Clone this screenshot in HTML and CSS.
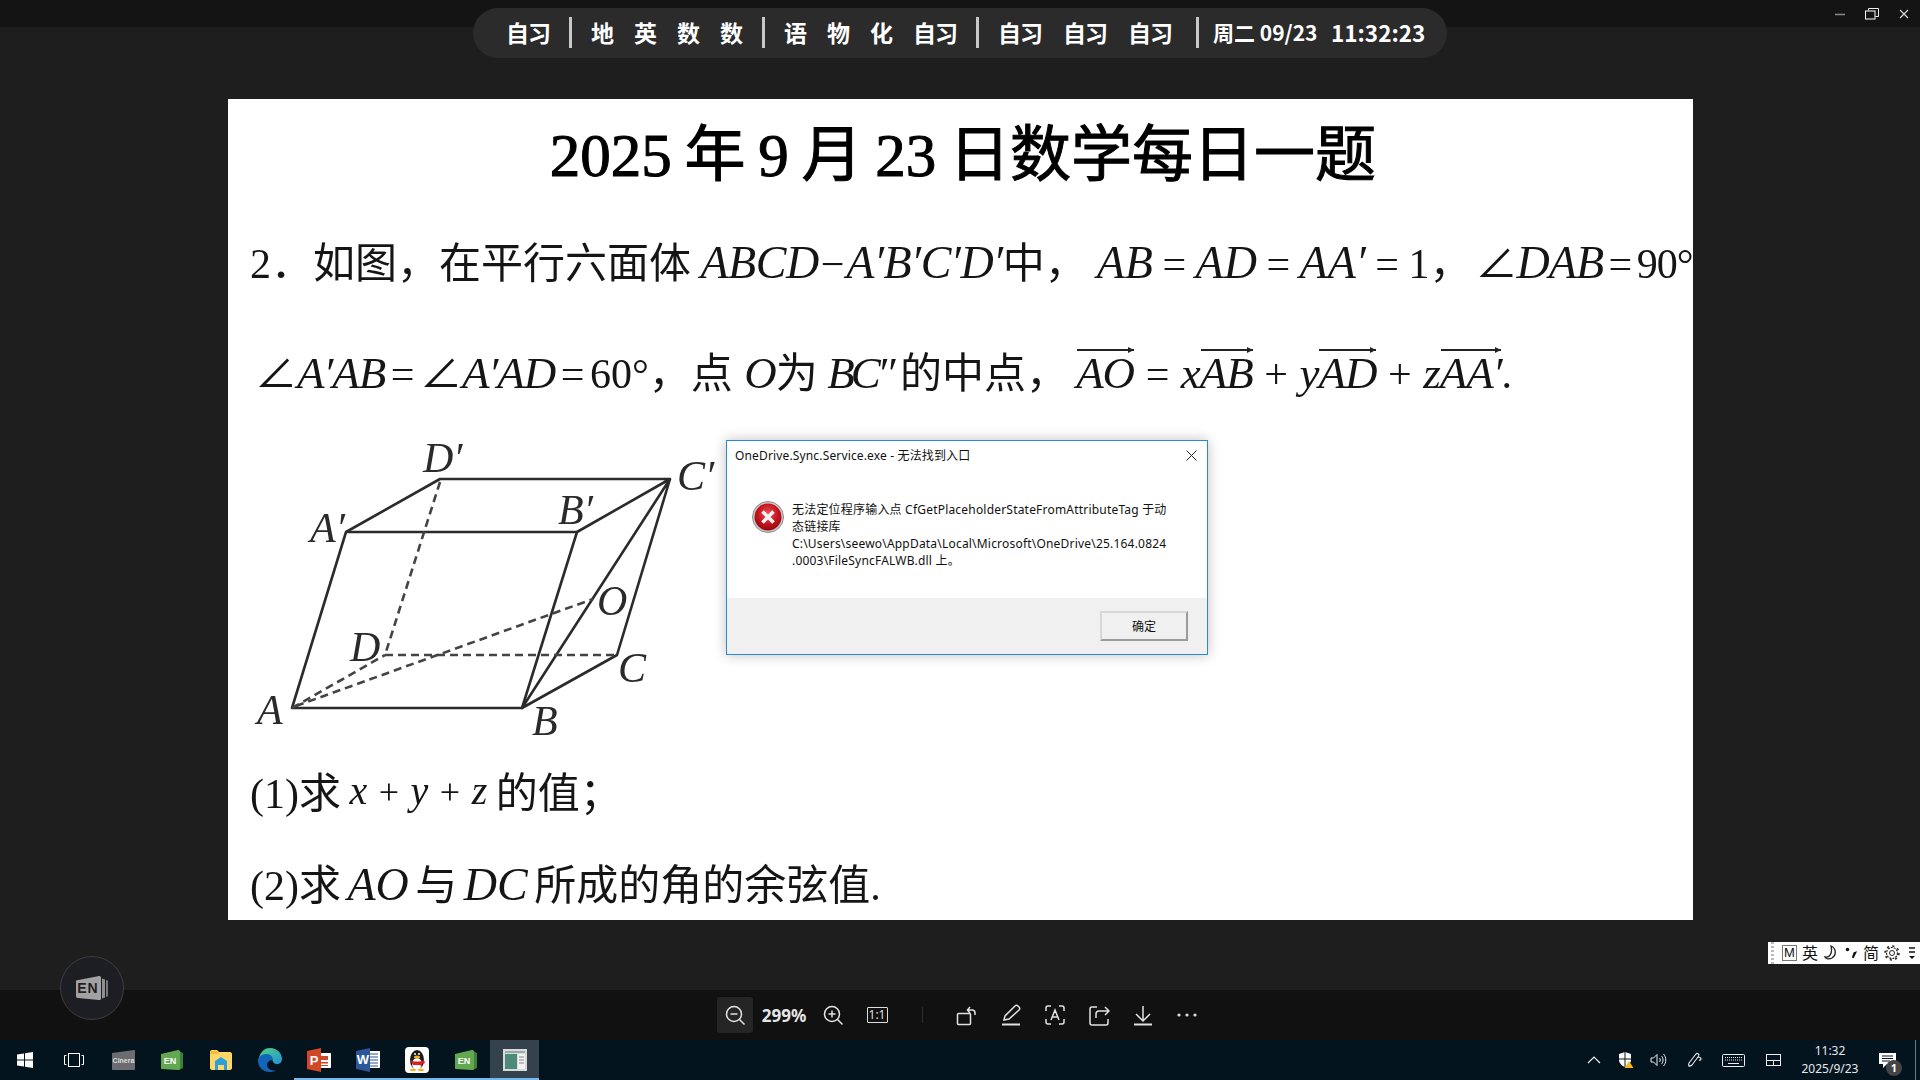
FILE: index.html
```html
<!DOCTYPE html>
<html lang="zh">
<head>
  <meta charset="UTF-8" />
  <title>图片查看</title>
  <link rel="stylesheet" href="styles.css">
</head>
<body>
  <div class="titlebar">
    <div class="win-btn"><svg width="12" height="12"><path d="M1 6.5h10" stroke="#8a8a8a" stroke-width="1.5"/></svg></div>
    <div class="win-btn"><svg width="14" height="12" viewBox="0 0 14 12"><path d="M3.5 2.5V.5h10v8h-3" fill="none" stroke="#eee"/><rect x=".5" y="3" width="9.5" height="8" fill="none" stroke="#fff"/></svg></div>
    <div class="win-btn"><svg width="10" height="10"><path d="M1 1l8 8M9 1l-8 8" stroke="#ddd" stroke-width="1.1"/></svg></div>
  </div>

  <div class="schedule">
    <span class="cn-pair">自习</span>
    <i class="sep"></i>
    <span class="group"><b>地</b><b>英</b><b>数</b><b>数</b></span>
    <i class="sep"></i>
    <span class="group"><b>语</b><b>物</b><b>化</b><b class="cn-pair">自习</b></span>
    <i class="sep"></i>
    <span class="group wide"><b class="cn-pair">自习</b><b class="cn-pair">自习</b><b class="cn-pair">自习</b></span>
    <i class="sep sep-last"></i>
    <span class="clock-text"><span class="date">周二 09/23</span><span class="time">11:32:23</span></span>
  </div>

  <main class="viewer">
    <div class="slide">
      <h1 class="slide-title">2025 年 9 月 23 日数学每日一题</h1>
      <div class="line line-a">2．如图，在平行六面体 <em class="m-wide">ABCD</em><span class="minus">−</span><em class="m-wide">A′B′C′D′</em>中，<em class="m-gap">AB</em> = <em>AD</em> = <em>AA′</em> = 1，<span class="right-angle"><span>∠</span><em>DAB</em> = 90°</span></div>
      <div class="line line-b"><span class="angle">∠</span><em>A′AB</em> = <span>∠</span><em>A′AD</em> = 60°，点 <em class="pt-o">O</em>为 <em class="bc">BC″</em> <span class="mid-text">的中点，</span><span class="vec-eq"><em class="vec vec-first">AO</em> = <em>x</em><em class="vec">AB</em> + <em>y</em><em class="vec">AD</em> + <em>z</em><em class="vec">AA′</em>.</span></div>

      <svg class="figure" width="480" height="320" viewBox="250 430 480 320">
        <g fill="none" stroke="#2b2b2b" stroke-width="2.6" stroke-linejoin="round">
          <path d="M292 706L346 530H577L522 706Z"/>
          <path d="M346 530L440 477H670L577 530"/>
          <path d="M670 477L617 653L522 706L670 477"/>
        </g>
        <g fill="none" stroke="#444" stroke-width="2.6" stroke-dasharray="8 5">
          <path d="M440 480L385 653"/>
          <path d="M385 653H617"/>
          <path d="M292 706L385 653"/>
          <path d="M296 704L593 597"/>
        </g>
        <g class="fig-label">
          <text x="423" y="470">D′</text>
          <text x="677" y="488">C′</text>
          <text x="558" y="522">B′</text>
          <text x="310" y="540">A′</text>
          <text x="597" y="613">O</text>
          <text x="350" y="659">D</text>
          <text x="618" y="680">C</text>
          <text x="257" y="722">A</text>
          <text x="532" y="733">B</text>
        </g>
      </svg>

      <div class="line line-c">(1)求 <span class="raised"><em class="small-math">x</em> <span class="small-math">+</span> <em class="small-math">y</em> <span class="small-math">+</span> <em class="small-math">z</em></span> 的值；</div>
      <div class="line line-d">(2)求 <em>AO</em> 与 <em>DC</em> 所成的角的余弦值.</div>
    </div>
  </main>

  <div class="dialog">
    <div class="dialog-title">OneDrive.Sync.Service.exe - 无法找到入口</div>
    <svg class="dialog-close" width="11" height="11"><path d="M.5.5l10 10M10.500.5l-10 10" stroke="#222"/></svg>
    <div class="dialog-body">
      <svg width="32" height="32" viewBox="0 0 32 32">
        <defs>
          <radialGradient id="errRed" cx="50%" cy="38%" r="65%">
            <stop offset="0" stop-color="#e8525a"/>
            <stop offset=".6" stop-color="#c4121c"/>
            <stop offset="1" stop-color="#8a0a10"/>
          </radialGradient>
        </defs>
        <circle cx="16" cy="16" r="15.500" fill="#c9c9c9" stroke="#8d8d8d"/>
        <circle cx="16" cy="16" r="13.500" fill="url(#errRed)"/>
        <path d="M10.500 10.500l11 11M21.500 10.500l-11 11" stroke="#f4f4f4" stroke-width="3.600"/>
      </svg>
      <p class="dialog-msg">无法定位程序输入点 CfGetPlaceholderStateFromAttributeTag 于动<br>态链接库<br>C:\Users\seewo\AppData\Local\Microsoft\OneDrive\25.164.0824<br>.0003\FileSyncFALWB.dll 上。</p>
    </div>
    <div class="dialog-foot"><button class="dialog-ok">确定</button></div>
  </div>

  <div class="float-en">
    <svg width="34" height="26" viewBox="0 0 34 26">
      <path d="M27 3.500l3 1v18l-3 1z" fill="#8f8f8f"/><path d="M31 5l2 .8v15.400l-2 .8z" fill="#777"/>
      <path d="M1 5.500L24 1c1.500-.2 2 .5 2 2v20c0 1.500-.5 2.200-2 2L3 23c-1.500-.1-2-.8-2-2z" fill="#a2a2a2"/>
      <text x="13" y="18" class="en-mark">EN</text>
    </svg>
  </div>

  <div class="ime">
    <i class="ime-grip"></i>
    <span class="ime-m">M</span>
    <span class="ime-cn">英</span>
    <svg width="16" height="16" viewBox="0 0 16 16"><path d="M8 1c5 2 6 9 1 12-3 1.500-6 1-7-1 4 1 8-3 6-11z" fill="none" stroke="#222" stroke-width="1.300"/></svg>
    <svg width="14" height="16" viewBox="0 0 16 16"><circle cx="4" cy="4" r="2" fill="#111"/><path d="M11 7l4-1-4 8-2-1z" fill="#111"/></svg>
    <span class="ime-cn">简</span>
    <svg width="16" height="16" viewBox="0 0 16 16"><circle cx="8" cy="8" r="2.500" fill="none" stroke="#222"/><circle cx="8" cy="8" r="5.500" fill="none" stroke="#222" stroke-width="1.200" stroke-dasharray="2 1"/><circle cx="8" cy="8" r="7" fill="none" stroke="#222" stroke-width="1.500" stroke-dasharray="2.200 3.300"/></svg>
    <svg class="ime-more" width="8" height="16" viewBox="0 0 8 16"><path d="M1 3h6M1 7h6" stroke="#111" stroke-width="1.600"/><path d="M1 11h6l-3 3z" fill="#111"/></svg>
  </div>

  <div class="toolbar">
    <div class="tool active"><svg width="22" height="22" viewBox="0 0 22 22" class="ic"><circle cx="10" cy="10" r="7.500"/><path d="M6.500 10h7M15.500 15.500l5 5"/></svg></div>
    <div class="zoom-pct">299%</div>
    <div class="tool"><svg width="22" height="22" viewBox="0 0 22 22" class="ic"><circle cx="10" cy="10" r="7.500"/><path d="M6.500 10h7M10 6.500v7M15.500 15.500l5 5"/></svg></div>
    <div class="tool"><span class="one-one">1:1</span></div>
    <i class="tool-div"></i>
    <div class="tool"><svg width="22" height="22" viewBox="0 0 22 22" class="ic"><rect x="1.500" y="9.500" width="13" height="11" rx="1"/><path d="M12 6h4c2 0 3 1 3 3v2M14 3l-2.500 3 2.500 3" /></svg></div>
    <div class="tool"><svg width="22" height="22" viewBox="0 0 22 22" class="ic"><path d="M4 16l1-4L15 2c1-1 2-1 3 0l1 1c1 1 1 2 0 3L9 15z"/><path d="M2 20.500h18" stroke-width="2"/></svg></div>
    <div class="tool"><svg width="22" height="22" viewBox="0 0 22 22" class="ic"><path d="M2 7V4c0-1 1-2 2-2h3M15 2h3c1 0 2 1 2 2v3M20 15v3c0 1-1 2-2 2h-3M7 20H4c-1 0-2-1-2-2v-3M7 16l4-10 4 10M8.500 13h5"/></svg></div>
    <div class="tool"><svg width="22" height="22" viewBox="0 0 22 22" class="ic"><path d="M9 3H4C3 3 2 4 2 5v14c0 1 1 2 2 2h14c1 0 2-1 2-2v-4M8 14V10c0-2 1-3 3-3h9M17 3l4 4-4 4"/></svg></div>
    <div class="tool"><svg width="22" height="22" viewBox="0 0 22 22" class="ic"><path d="M11 2v14M4 10l7 7 7-7"/><path d="M2 20.500h18" stroke-width="2"/></svg></div>
    <div class="tool"><svg width="22" height="6" viewBox="0 0 22 6"><circle cx="3" cy="3" r="1.600" fill="#ddd"/><circle cx="11" cy="3" r="1.600" fill="#ddd"/><circle cx="19" cy="3" r="1.600" fill="#ddd"/></svg></div>
  </div>

  <footer class="taskbar">
    <div class="task"><svg width="16" height="16" viewBox="0 0 16 16" fill="#fff"><path d="M0 2.500l7-1v6H0zM8 1.300L16 0v7.500H8zM0 8.500h7v6l-7-1zM8 8.500h8V16l-8-1.300z"/></svg></div>
    <div class="task"><svg width="20" height="14" viewBox="0 0 20 14" fill="none" stroke="#fff"><rect x="4.500" y=".5" width="11" height="13"/><path d="M2.500 2.500H.5v9h2M17.500 2.500h2v9h-2"/></svg></div>
    <div class="task"><svg width="24" height="22" viewBox="0 0 24 22"><path d="M1 4l22-3c.6 0 1 .4 1 1v18c0 .6-.4 1-1 1H2c-.6 0-1-.4-1-1z" fill="#6a6c70"/><text x="12.500" y="14" class="cinera">Cinera</text></svg></div>
    <div class="task"><svg width="24" height="22" viewBox="0 0 24 22"><path d="M19 2l4 2v15l-4 2z" fill="#3f7f3c"/><path d="M1 5l17-4c1 0 2 .5 2 2v16c0 1.500-1 2-2 2L2 20c-.6 0-1-.4-1-1z" fill="#62a850"/><text x="10" y="15" class="en-white">EN</text></svg></div>
    <div class="task"><svg width="22" height="20" viewBox="0 0 22 20"><path d="M0 2c0-1 .5-2 2-2h5l2 2h11c1 0 2 1 2 2v14c0 1-1 2-2 2H2c-1 0-2-1-2-2z" fill="#ffd766"/><path d="M0 4h8l1-2H7L6 1H1z" fill="#f0b93a"/><path d="M5 11l6-4 6 4v9h-3v-5H8v5H5z" fill="#2a9fe0" transform="translate(0 0)"/></svg></div>
    <div class="task"><svg width="24" height="24" viewBox="0 0 24 24"><defs><linearGradient id="edgeA" x1="0" y1="0" x2="1" y2="1"><stop offset="0" stop-color="#52d27c"/><stop offset="1" stop-color="#1f94d8"/></linearGradient></defs><path d="M12 0c7 0 12 5 12 11 0 3-2 5-5 5-3 0-4-2-4-3 0 .8-3-6-8-5-4 1-6 3-7 6C1 6 5 0 12 0z" fill="url(#edgeA)"/><path d="M0 13c0-4 4-7 8-7 5 0 7 3 7 6-2 0-6 1-6 5 0 3 4 7 10 5-2 1-4 2-7 2C5 24 0 19 0 13z" fill="#1266b8"/></svg></div>
    <div class="task running"><svg width="24" height="24" viewBox="0 0 24 24"><path d="M8 5h15c.6 0 1 .4 1 1v13c0 .6-.4 1-1 1H8z" fill="#fff"/><path d="M13 8h8v4h-8zM13 14h8v1.500h-8zM13 17h8v1h-8z" fill="#d24726"/><path d="M0 3l14-3v24L0 21z" fill="#d24726"/><text x="7" y="17" class="doc-letter">P</text></svg></div>
    <div class="task running"><svg width="24" height="24" viewBox="0 0 24 24"><path d="M8 3h15c.6 0 1 .4 1 1v15c0 .6-.4 1-1 1H8z" fill="#fff"/><path d="M14 6h8M14 9h8M14 12h8M14 15h8M14 18h8" stroke="#2b579a" stroke-width="1.200"/><path d="M0 3l14-3v24L0 21z" fill="#2b579a"/><text x="7" y="16" class="doc-letter">W</text></svg></div>
    <div class="task running"><svg width="24" height="26" viewBox="0 0 24 26"><rect width="24" height="26" rx="4" fill="#fff"/><ellipse cx="12" cy="13" rx="7" ry="10" fill="#1a1a1a"/><ellipse cx="12" cy="17" rx="5" ry="6" fill="#fff"/><path d="M5 13c4 2 10 2 14 0l1 3-3 1v3l-2-2H8z" fill="#d9202a"/><ellipse cx="12" cy="10" rx="3" ry="1.500" fill="#f5b321"/><circle cx="10" cy="7" r="1" fill="#fff"/><circle cx="14" cy="7" r="1" fill="#fff"/><ellipse cx="8" cy="23" rx="3" ry="1.300" fill="#f5b321"/><ellipse cx="16" cy="23" rx="3" ry="1.300" fill="#f5b321"/></svg></div>
    <div class="task running"><svg width="24" height="22" viewBox="0 0 24 22"><path d="M19 2l4 2v15l-4 2z" fill="#3f7f3c"/><path d="M1 5l17-4c1 0 2 .5 2 2v16c0 1.500-1 2-2 2L2 20c-.6 0-1-.4-1-1z" fill="#62a850"/><text x="10" y="15" class="en-white">EN</text></svg></div>
    <div class="task running current"><svg width="24" height="22" viewBox="0 0 24 22"><rect width="24" height="22" fill="#d8dcd8"/><rect x="2" y="2" width="20" height="2" fill="#9aa"/><rect x="2" y="5" width="12" height="15" fill="#4e8a78"/><rect x="15" y="5" width="7" height="15" fill="#f2f2f2"/><path d="M16 8h5M16 11h5M16 14h5" stroke="#888"/></svg></div>

    <div class="tray">
      <div class="tray-item w32"><svg width="14" height="8" viewBox="0 0 14 8"><path d="M1 7l6-6 6 6" fill="none" stroke="#eee" stroke-width="1.200"/></svg></div>
      <div class="tray-item w32"><svg width="16" height="16" viewBox="0 0 16 16"><path d="M7 0l6 2v6c0 3-3 6-6 7-3-1-6-4-6-7V2z" fill="#fff"/><path d="M7 0v15M1 7h12" stroke="#06141e"/><path d="M11 9l4.500 7h-9z" fill="#f3b81a"/></svg></div>
      <div class="tray-item w32"><svg width="17" height="14" viewBox="0 0 17 14" fill="none" stroke="#eee"><path d="M1 5h2.500L7 1.500v11L3.500 9H1zM9.500 5c1 1 1 3 0 4M11.500 3c2 2 2 6 0 8M13.500 1c3 3 3 9 0 12"/></svg></div>
      <div class="tray-item w40"><svg width="17" height="17" viewBox="0 0 17 17" fill="none" stroke="#eee" stroke-width="1.100"><path d="M3 11l7-9c1-1 2-.5 2.500 0s.5 1.500 0 2.300L6 13c-1 1-2 1-3 1.200-.5-1 -.5-2 0-3.200zM12 5c2 0 3 1 3 2s-1 1.500-2 1"/></svg></div>
      <div class="tray-item w38"><svg width="23" height="13" viewBox="0 0 23 13" fill="none" stroke="#eee"><rect x=".5" y=".5" width="22" height="12" rx="1"/><path d="M3 3.500h17M3 6h17" stroke-dasharray="1 1"/><path d="M6 9.500h11"/></svg></div>
      <div class="tray-item w42"><svg width="15" height="12" viewBox="0 0 15 12" fill="none" stroke="#eee"><rect x=".5" y=".5" width="14" height="11"/><path d="M.5 6.500h14M7.500 6.500v5"/></svg></div>
      <div class="tray-clock"><span>11:32</span><span>2025/9/23</span></div>
      <div class="tray-notice">
        <svg width="17" height="15" viewBox="0 0 17 15"><path d="M0 0h17v11H8l-4 4v-4H0z" fill="#fff"/><path d="M3 3h11M3 5.500h11M3 8h8" stroke="#06141e"/></svg>
        <span class="badge">1</span>
      </div>
      <i class="show-desktop"></i>
    </div>
  </footer>
</body>
</html>
```

FILE: styles.css
```css
html, body {
  margin: 0;
  height: 100%;
}
body {
  width: 1920px;
  height: 1080px;
  overflow: hidden;
  display: flex;
  flex-direction: column;
  background: #1e1e1e;
  font-family: "Noto Sans", "Noto Sans CJK SC", sans-serif;
  position: relative;
}
.titlebar {
  height: 27px;
  background: #141414;
  display: flex;
  justify-content: flex-end;
  flex: none;
}
.win-btn {
  width: 32px;
  display: flex;
  align-items: center;
  justify-content: center;
}
.schedule {
  position: absolute;
  top: 8px;
  left: 473px;
  width: 974px;
  height: 50px;
  box-sizing: border-box;
  padding: 0 0 2px 33px;
  background: #2b2b2b;
  border-radius: 25px;
  display: flex;
  align-items: center;
  color: #fff;
  font-size: 23px;
  font-weight: 700;
  font-family: "Noto Sans CJK SC", sans-serif;
  white-space: nowrap;
}
.schedule b {
  font-weight: 700;
}
.cn-pair {
  width: 44px;
  letter-spacing: -1px;
}
.sep {
  width: 3px;
  height: 31px;
  background: #c8c8c8;
  margin: 0 19px;
}
.sep-last {
  margin-left: 24px;
}
.group {
  display: flex;
  gap: 20px;
}
.group.wide {
  gap: 21px;
}
.clock-text {
  display: flex;
  align-items: center;
  font-size: 21px;
  margin-left: -5px;
}
.date {
  width: 118px;
}
.time {
  font-size: 22.500px;
}

.viewer {
  flex: 1;
  padding-top: 72px;
  min-height: 0;
}
.slide {
  width: 1465px;
  height: 821px;
  margin-left: 228px;
  background: #fff;
  overflow: hidden;
  color: #151515;
  font-family: "Liberation Serif", "Noto Sans CJK SC", serif;
  font-size: 42px;
  filter: blur(0.5px);
}
.slide-title {
  margin: 0;
  height: 114px;
  line-height: 114px;
  text-align: center;
  font-size: 61px;
  font-weight: 400;
  color: #000;
  padding-left: 5px;
  word-spacing: -2.500px;
  -webkit-text-stroke: 1px #000;
}
.line {
  white-space: nowrap;
  padding-left: 22px;
  line-height: 72px;
}
.line em {
  font-size: 46px;
}
.line-a {
  margin-top: 14px;
  word-spacing: -1px;
}
.right-angle {
  margin-left: 4px;
  letter-spacing: -1px;
  word-spacing: -4px;
}
.line-b {
  margin-top: 37px;
  padding-left: 27px;
  word-spacing: -5px;
}
.line-b em {
  font-size: 45px;
  letter-spacing: -1px;
}
.line-b em.bc {
  letter-spacing: -4px;
  margin-left: 4px;
}
.pt-o {
  margin-left: 6px;
}
.mid-text {
  margin-left: 3px;
}
.vec-first {
  margin-left: 8px;
}
.vec-eq {
  word-spacing: 1px;
}
.m-wide {
  letter-spacing: -0.500px;
}
.minus {
  margin: 0 2px;
}
.m-gap {
  margin-left: 10px;
}
.small-math {
  font-size: 36px;
}
.line em.small-math {
  font-size: 40px;
}
.raised {
  position: relative;
  top: -4px;
  word-spacing: 1px;
}
.vec {
  display: inline-block;
  position: relative;
  line-height: 56px;
}
.vec::before {
  content: "";
  position: absolute;
  left: 1px;
  right: 0;
  top: 4px;
  height: 2px;
  background: #222;
}
.vec::after {
  content: "";
  position: absolute;
  right: 0;
  top: 2px;
  border-left: 6px solid #222;
  border-top: 3px solid transparent;
  border-bottom: 3px solid transparent;
}
.figure {
  display: block;
  margin-left: 22px;
  margin-top: 22px;
}
.fig-label text {
  font-family: "Liberation Serif", serif;
  font-style: italic;
  font-size: 42px;
  fill: #2a2a2a;
}
.line-c {
  margin-top: 6px;
  word-spacing: -2px;
}
.line-d {
  margin-top: 17px;
  word-spacing: -4px;
}

.dialog {
  position: absolute;
  left: 726px;
  top: 440px;
  width: 482px;
  height: 215px;
  box-sizing: border-box;
  background: #fff;
  border: 1px solid #2a88d8;
  box-shadow: 0 0 12px rgba(0, 0, 0, 0.25);
  display: flex;
  flex-direction: column;
  font-size: 12px;
  color: #111;
}
.dialog-title {
  height: 30px;
  line-height: 30px;
  padding-left: 8px;
  letter-spacing: 0.150px;
}
.dialog-close {
  position: absolute;
  top: 9px;
  right: 10px;
}
.dialog-body {
  flex: 1;
  display: flex;
  gap: 8px;
  padding: 30px 0 0 25px;
}
.dialog-msg {
  margin: 0;
  line-height: 17px;
  white-space: nowrap;
  letter-spacing: 0.200px;
}
.dialog-foot {
  height: 56px;
  background: #f0f0f0;
  display: flex;
  align-items: center;
  justify-content: flex-end;
  padding-right: 19px;
}
.dialog-ok {
  width: 88px;
  height: 30px;
  background: #f0f0f0;
  border: 2px solid #9a9a9a;
  border-top-color: #d8d8d8;
  border-left-color: #d8d8d8;
  font: inherit;
  color: #111;
  margin-top: -1px;
}

.float-en {
  position: absolute;
  left: 60px;
  top: 956px;
  width: 62px;
  height: 62px;
  border-radius: 50%;
  background: #1d1e23;
  border: 1px solid #3e3e3e;
  display: flex;
  align-items: center;
  justify-content: center;
}
.en-mark {
  font: 700 14px "Liberation Sans", sans-serif;
  text-anchor: middle;
  fill: #1f1f24;
  letter-spacing: 1px;
}

.ime {
  position: absolute;
  right: 0;
  top: 942px;
  width: 152px;
  height: 22px;
  background: #fff;
  box-sizing: border-box;
  padding-left: 3px;
  display: flex;
  align-items: center;
  gap: 5px;
  color: #111;
  overflow: hidden;
}
.ime-grip {
  width: 3px;
  height: 22px;
  margin-right: 3px;
  background: repeating-linear-gradient(#bbb 0 2px, transparent 2px 4px);
}
.ime-m {
  width: 13px;
  height: 14px;
  line-height: 14px;
  border: 1px solid #777;
  font: 13px/14px "Liberation Sans", sans-serif;
  text-align: center;
}
.ime-cn {
  font-size: 16px;
  line-height: 20px;
}
.ime-more {
  margin-left: 3px;
}

.toolbar {
  height: 50px;
  flex: none;
  box-sizing: border-box;
  padding-left: 2px;
  background: #111;
  display: flex;
  align-items: center;
  justify-content: center;
  gap: 8px;
}
.tool {
  width: 36px;
  height: 36px;
  border-radius: 3px;
  display: flex;
  align-items: center;
  justify-content: center;
}
.tool.active {
  background: #252525;
}
.ic {
  fill: none;
  stroke: #e2e2e2;
  stroke-width: 1.500;
}
.zoom-pct {
  width: 46px;
  color: #e6e6e6;
  font-size: 17px;
  font-weight: 700;
  text-align: center;
  white-space: nowrap;
}
.one-one {
  width: 19px;
  height: 14px;
  border: 1.500px solid #ddd;
  border-radius: 1px;
  color: #ddd;
  font-size: 12px;
  line-height: 14px;
  text-align: center;
}
.tool-div {
  width: 1px;
  height: 16px;
  background: #2c2c2c;
  margin: 0 18px 0 19px;
}

.taskbar {
  height: 40px;
  flex: none;
  background: #04141f;
  display: flex;
}
.task {
  width: 49px;
  height: 40px;
  box-sizing: border-box;
  display: flex;
  align-items: center;
  justify-content: center;
}
.task.running {
  border-bottom: 2px solid #76b9ed;
  padding-top: 2px;
}
.task.current {
  background: #33424c;
}
.cinera {
  font: 700 7px "Liberation Sans", sans-serif;
  fill: #ddd;
  text-anchor: middle;
}
.en-white {
  font: 700 9px "Liberation Sans", sans-serif;
  fill: #fff;
  text-anchor: middle;
}
.doc-letter {
  font: 700 13px "Liberation Sans", sans-serif;
  fill: #fff;
  text-anchor: middle;
}
.tray {
  margin-left: auto;
  display: flex;
  align-items: center;
  height: 40px;
}
.tray-item {
  display: flex;
  justify-content: center;
  align-items: center;
}
.w32 { width: 32px; }
.w38 { width: 38px; }
.w40 { width: 40px; }
.w42 { width: 42px; }
.tray-clock {
  width: 72px;
  display: flex;
  flex-direction: column;
  align-items: center;
  gap: 2px;
  color: #e8e8e8;
  font-size: 12px;
  line-height: 16px;
}
.tray-notice {
  width: 49px;
  height: 40px;
  position: relative;
  display: flex;
  align-items: center;
  justify-content: center;
  padding-right: 6px;
  box-sizing: border-box;
}
.badge {
  position: absolute;
  left: 20px;
  top: 20px;
  width: 16px;
  height: 16px;
  border-radius: 50%;
  background: #444;
  color: #fff;
  font-size: 11px;
  font-weight: 700;
  line-height: 16px;
  text-align: center;
}
.show-desktop {
  width: 5px;
  height: 40px;
  box-sizing: border-box;
  border-left: 1px solid #6d7a82;
}
```
